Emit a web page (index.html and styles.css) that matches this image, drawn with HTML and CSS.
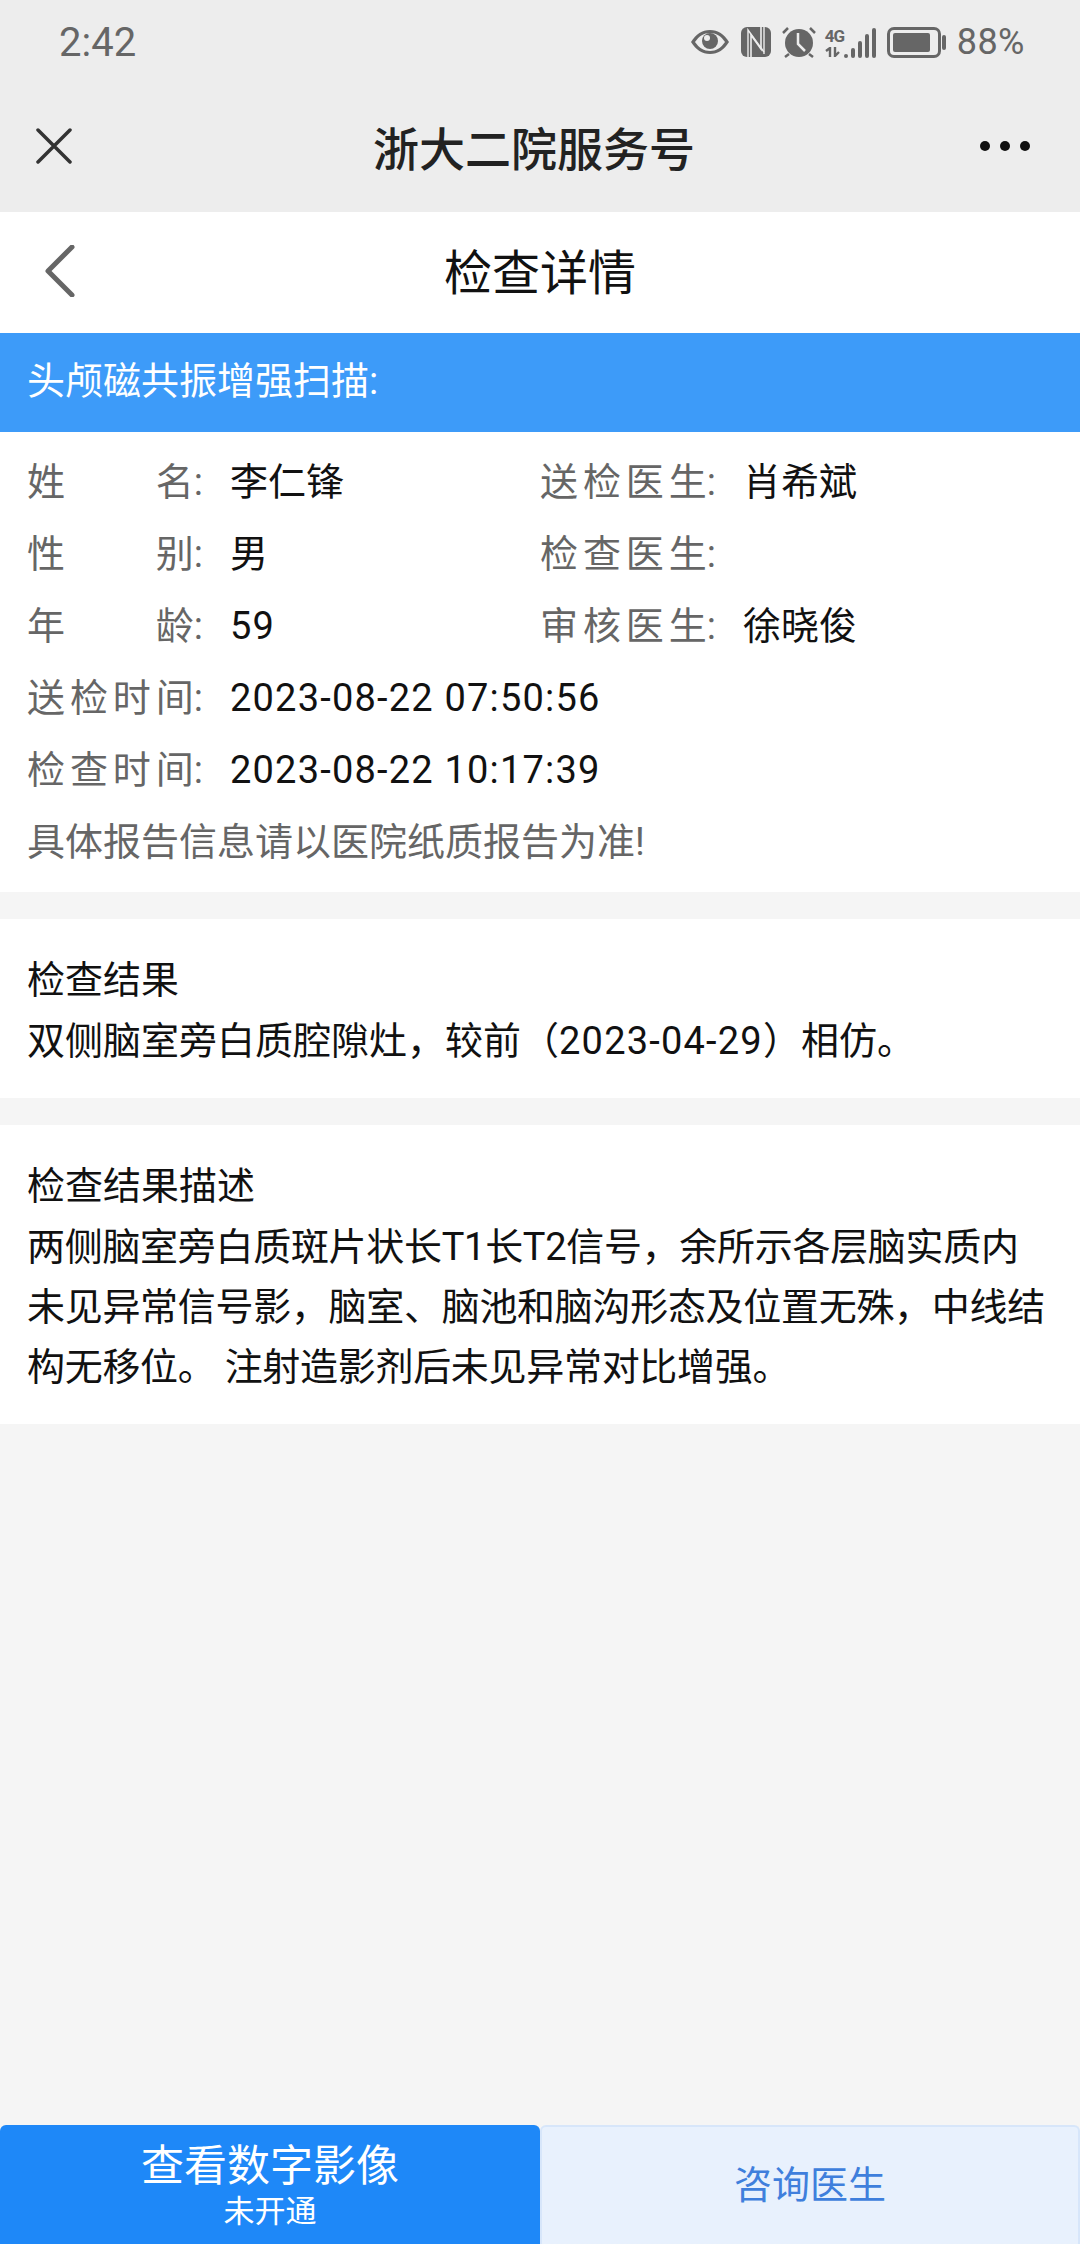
FILE: index.html
```html
<!DOCTYPE html>
<html lang="zh-CN">
<head>
    <meta charset="UTF-8">
    <meta name="viewport" content="width=device-width, initial-scale=1.0">
    <title>检查详情</title>
    <link rel="stylesheet" href="styles.css">
</head>
<body>
    <div class="top-area">
        <div class="status-bar">
            <span class="status-time">2:42</span>
            <div class="status-icons">
                <svg class="icon-eye" width="40" height="28" viewBox="0 0 40 28">
                    <path d="M1 14C6 6 12 2 20 2s14 4 19 12c-5 8-11 12-19 12S6 22 1 14z" fill="#666"/>
                    <path d="M5 14c4-6 9-9 15-9s11 3 15 9c-4 6-9 9-15 9S9 20 5 14z" fill="#ededed"/>
                    <circle cx="20" cy="13" r="8" fill="#666"/>
                    <circle cx="17" cy="10" r="3" fill="#ededed"/>
                </svg>
                <svg class="icon-nfc" width="30" height="30" viewBox="0 0 30 30">
                    <rect width="30" height="30" rx="6" fill="#666"/>
                    <path d="M10 30V8l10 14V0" fill="none" stroke="#ededed" stroke-width="1.6"/>
                    <path d="M7 30V3l16 22" fill="none" stroke="#ededed" stroke-width="1.4"/>
                    <path d="M23 0v27" fill="none" stroke="#ededed" stroke-width="1.4"/>
                </svg>
                <svg class="icon-alarm" width="34" height="32" viewBox="0 0 34 32">
                    <circle cx="17" cy="17" r="14" fill="#666"/>
                    <path d="M16 7v11l7 7" fill="none" stroke="#ededed" stroke-width="2.5"/>
                    <path d="M1 7l5-5M33 7l-5-5M3 31l4-3M31 31l-4-3" stroke="#666" stroke-width="2.5"/>
                </svg>
                <div class="net">
                    <div class="net-type">
                        <span>4G</span>
                        <svg width="18" height="10" viewBox="0 0 18 10">
                            <path d="M5 10V1L1 4M10 0v9l4-4" fill="none" stroke="#666" stroke-width="2.4"/>
                        </svg>
                    </div>
                    <div class="signal">
                        <i class="bar1"></i><i class="bar2"></i><i class="bar3"></i><i class="bar4"></i><i class="bar5"></i>
                    </div>
                </div>
                <div class="battery">
                    <div class="battery-body"><div class="battery-level"></div></div>
                    <div class="battery-nub"></div>
                </div>
                <span class="status-pct">88%</span>
            </div>
        </div>
        <div class="wx-bar">
            <svg width="36" height="36" viewBox="0 0 36 36">
                <path d="M2 2l32 32M34 2L2 34" stroke="#333" stroke-width="3.5" stroke-linecap="round"/>
            </svg>
            <div class="wx-title">浙大二院服务号</div>
            <div class="wx-more"><i></i><i></i><i></i></div>
        </div>
    </div>

    <div class="page-head">
        <svg width="32" height="52" viewBox="0 0 32 52">
            <path d="M28 2L4 26l24 24" fill="none" stroke="#666" stroke-width="5" stroke-linecap="round" stroke-linejoin="round"/>
        </svg>
        <div class="page-title">检查详情</div>
    </div>

    <div class="exam-name">头颅磁共振增强扫描:</div>

    <div class="card info-card">
        <div class="info-row">
            <div class="info-cell">
                <div class="label"><span>姓</span><span>名:</span></div>
                <span>李仁锋</span>
            </div>
            <div class="info-cell">
                <div class="label"><span>送</span><span>检</span><span>医</span><span>生:</span></div>
                <span>肖希斌</span>
            </div>
        </div>
        <div class="info-row">
            <div class="info-cell">
                <div class="label"><span>性</span><span>别:</span></div>
                <span>男</span>
            </div>
            <div class="info-cell">
                <div class="label"><span>检</span><span>查</span><span>医</span><span>生:</span></div>
            </div>
        </div>
        <div class="info-row">
            <div class="info-cell">
                <div class="label"><span>年</span><span>龄:</span></div>
                <span class="num">59</span>
            </div>
            <div class="info-cell">
                <div class="label"><span>审</span><span>核</span><span>医</span><span>生:</span></div>
                <span>徐晓俊</span>
            </div>
        </div>
        <div class="info-row">
            <div class="info-cell">
                <div class="label"><span>送</span><span>检</span><span>时</span><span>间:</span></div>
                <span class="num">2023-08-22 07:50:56</span>
            </div>
        </div>
        <div class="info-row">
            <div class="info-cell">
                <div class="label"><span>检</span><span>查</span><span>时</span><span>间:</span></div>
                <span class="num">2023-08-22 10:17:39</span>
            </div>
        </div>
        <div class="info-row note">具体报告信息请以医院纸质报告为准!</div>
    </div>

    <div class="card text-card">
        <div class="card-title">检查结果</div>
        <div>双侧脑室旁白质腔隙灶，较前（<span class="num">2023-04-29</span>）相仿。</div>
    </div>

    <div class="card text-card">
        <div class="card-title">检查结果描述</div>
        <div class="desc">两侧脑室旁白质斑片状长T1长T2信号，余所示各层脑实质内未见异常信号影，脑室、脑池和脑沟形态及位置无殊，中线结构无移位。 注射造影剂后未见异常对比增强。</div>
    </div>

    <div class="bottom-btns">
        <div class="btn btn-primary">
            <div class="btn-main">查看数字影像</div>
            <div class="btn-sub">未开通</div>
        </div>
        <div class="btn btn-light">咨询医生</div>
    </div>
</body>
</html>
```

FILE: styles.css
```css
* {
    box-sizing: border-box;
}
body {
    font-family: Roboto, "Noto Sans CJK SC", sans-serif;
    background-color: #f5f5f5;
    margin: 0;
    width: 1080px;
    height: 2244px;
    display: flex;
    flex-direction: column;
    font-size: 38px;
    color: #111;
}
.top-area {
    background-color: #ededed;
    height: 212px;
    flex-shrink: 0;
}
.status-bar {
    height: 84px;
    padding: 0 55px 0 59px;
    display: flex;
    justify-content: space-between;
    align-items: center;
    color: #666;
}
.status-time {
    font-size: 40px;
}
.status-icons {
    display: flex;
    align-items: center;
}
.icon-nfc, .icon-alarm {
    margin-left: 11px;
}
.net {
    margin-left: 9px;
    display: flex;
    align-items: flex-end;
}
.net-type {
    display: flex;
    flex-direction: column;
    font-size: 17px;
    line-height: 19px;
    font-weight: 700;
    letter-spacing: -1px;
    width: 19px;
    margin-bottom: 1px;
}
.net-type svg {
    display: block;
    margin-top: 1px;
}
.signal {
    display: flex;
    align-items: flex-end;
    gap: 3px;
}
.signal i {
    display: block;
    width: 4px;
    background-color: #666;
    border-radius: 2px;
}
.bar1 { height: 4px; }
.bar2 { height: 10px; }
.bar3 { height: 17px; }
.bar4 { height: 24px; }
.bar5 { height: 30px; }
.battery {
    margin-left: 11px;
    display: flex;
    align-items: center;
    gap: 1px;
}
.battery-body {
    width: 54px;
    height: 31px;
    border: 3px solid #666;
    border-radius: 7px;
    padding: 3px;
}
.battery-level {
    width: 88%;
    height: 100%;
    background-color: #666;
    border-radius: 2px;
}
.battery-nub {
    width: 4px;
    height: 15px;
    background-color: #666;
    border-radius: 2px;
}
.status-pct {
    margin-left: 11px;
    font-size: 36px;
    letter-spacing: 0.5px;
}
.wx-bar {
    height: 128px;
    padding: 0 50px 4px 36px;
    display: flex;
    align-items: center;
    justify-content: space-between;
}
.wx-title {
    font-size: 46px;
    font-weight: 500;
    color: #222;
    margin-left: 16px;
}
.wx-more {
    display: flex;
    gap: 10px;
}
.wx-more i {
    display: block;
    width: 10px;
    height: 10px;
    border-radius: 50%;
    background-color: #111;
}
.page-head {
    height: 121px;
    background: white;
    position: relative;
    display: flex;
    align-items: center;
    justify-content: center;
    padding-bottom: 8px;
    flex-shrink: 0;
}
.page-head svg {
    position: absolute;
    left: 44px;
    top: 33px;
}
.page-title {
    font-size: 48px;
    color: #111;
}
.exam-name {
    height: 99px;
    background-color: #3d9bf9;
    color: white;
    line-height: 96px;
    padding-left: 27px;
    flex-shrink: 0;
}
.card {
    background: white;
    padding: 0 27px;
}
.info-card {
    height: 460px;
    padding-top: 14px;
    flex-shrink: 0;
}
.info-row {
    display: flex;
    height: 72px;
    line-height: 72px;
    white-space: nowrap;
}
.info-cell {
    width: 513px;
    display: flex;
    flex-shrink: 0;
}
.label {
    width: 176px;
    margin-right: 27px;
    flex-shrink: 0;
    color: #666;
    display: flex;
    justify-content: space-between;
}
.num {
    letter-spacing: 1.2px;
}
.note {
    color: #666;
}
.text-card {
    margin-top: 27px;
    padding-top: 31px;
    padding-bottom: 27px;
    line-height: 60px;
    flex-shrink: 0;
}
.card-title {
    margin-bottom: 1px;
}
.desc {
    letter-spacing: -0.3px;
}
.bottom-btns {
    margin-top: auto;
    height: 119px;
    display: flex;
    flex-shrink: 0;
}
.btn {
    width: 50%;
    border-radius: 6px 6px 0 0;
    display: flex;
    flex-direction: column;
    align-items: center;
    justify-content: center;
}
.btn-primary {
    background-color: #1e88f8;
    color: white;
}
.btn-main {
    font-size: 43px;
    line-height: 54px;
}
.btn-sub {
    font-size: 31px;
    line-height: 38px;
}
.btn-light {
    background-color: #e8f1fd;
    border: 2px solid #d7e6fa;
    border-bottom: none;
    color: #3f7fdc;
    font-size: 38px;
    padding-bottom: 8px;
}
```
